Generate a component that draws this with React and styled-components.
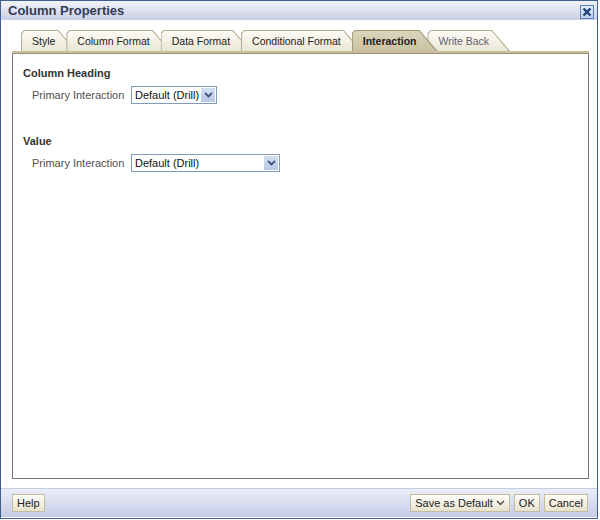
import React from 'react';
import styled, { createGlobalStyle } from 'styled-components';

const tabs = ['Style', 'Column Format', 'Data Format', 'Conditional Format', 'Interaction', 'Write Back'];

const Chevron = ({ color = '#3f5580', weight = 1.8 }) => (
  <svg width="9" height="6" viewBox="0 0 9 6">
    <path d="M1 1 L4.5 4.5 L8 1" fill="none" stroke={color} strokeWidth={weight} />
  </svg>
);

const Select = ({ value, width }) => (
  <SelectBox $width={width}>
    <span>{value}</span>
    <ArrowButton>
      <Chevron />
    </ArrowButton>
  </SelectBox>
);

const App = () => (
  <>
    <GlobalStyle />
    <Window>
      <TitleBar>
        <Title>Column Properties</Title>
        <CloseButton>
          <svg width="10" height="10" viewBox="0 0 10 10">
            <path d="M1.5 1.5 L8.5 8.5 M8.5 1.5 L1.5 8.5" stroke="#1f3f78" strokeWidth="2.4" />
          </svg>
        </CloseButton>
      </TitleBar>
      <Body>
        <TabRow>
          {tabs.map((t) => (
            <Tab key={t} $active={t === 'Interaction'} $muted={t === 'Write Back'}>
              <span>{t}</span>
            </Tab>
          ))}
        </TabRow>
        <TabBand />
        <Panel>
          <Section>
            <Heading>Column Heading</Heading>
            <Row>
              <Label>Primary Interaction</Label>
              <Select value="Default (Drill)" width={86} />
            </Row>
          </Section>
          <Section>
            <Heading>Value</Heading>
            <Row>
              <Label>Primary Interaction</Label>
              <Select value="Default (Drill)" width={149} />
            </Row>
          </Section>
        </Panel>
      </Body>
      <Footer>
        <Button>Help</Button>
        <Spacer />
        <Button>
          Save as Default <Chevron color="#333" weight={1.1} />
        </Button>
        <Button>OK</Button>
        <Button>Cancel</Button>
      </Footer>
    </Window>
  </>
);

const GlobalStyle = createGlobalStyle`
  body {
    margin: 0;
    background: #fff;
    font-family: "Liberation Sans", Arial, sans-serif;
    font-size: 11px;
  }
`;

const Window = styled.div`
  width: 596px;
  height: 517px;
  border: 1px solid #3e5f92;
  display: flex;
  flex-direction: column;
  background: #fff;
`;

const TitleBar = styled.div`
  flex-shrink: 0;
  height: 19px;
  display: flex;
  align-items: center;
  padding: 0 3px 0 7px;
  background: linear-gradient(#f2f3f9, #dfe2f1 50%, #c9cde6);
`;

const Title = styled.div`
  flex: 1;
  font-size: 13px;
  font-weight: bold;
  color: #323c58;
`;

const CloseButton = styled.div`
  width: 12px;
  height: 12px;
  margin-top: 3px;
  border: 1px solid #5b80b8;
  background: linear-gradient(#e4ecf8, #bfcfe9);
  display: flex;
  align-items: center;
  justify-content: center;
`;

const Body = styled.div`
  flex-shrink: 0;
  display: flex;
  flex-direction: column;
  padding: 10px 8px 0 11px;
`;

const TabRow = styled.div`
  flex-shrink: 0;
  display: flex;
  padding-left: 9px;
  height: 21px;
`;

const Tab = styled.div`
  position: relative;
  z-index: ${(p) => (p.$active ? 5 : 1)};
  height: 21px;
  padding: 0 21px 0 11px;
  margin-right: -10px;
  display: flex;
  align-items: center;
  font-size: 10.5px;
  background: ${(p) => (p.$active ? '#9d9474' : '#b4ad90')};
  clip-path: polygon(0 3px, 3px 0, calc(100% - 18px) 0, 100% 100%, 0 100%);
  color: ${(p) => (p.$muted ? '#635d72' : '#222')};
  font-weight: ${(p) => (p.$active ? 'bold' : 'normal')};

  &::before {
    content: '';
    position: absolute;
    inset: 0;
    background: ${(p) =>
      p.$active ? 'linear-gradient(#dcd6be, #c9c1a2)' : 'linear-gradient(#fdfcf6, #ebe7d6)'};
    clip-path: polygon(1px 3.5px, 3.5px 1px, calc(100% - 18.5px) 1px, calc(100% - 1.5px) 100%, 1px 100%);
  }

  span {
    position: relative;
    white-space: nowrap;
  }
`;

const TabBand = styled.div`
  flex-shrink: 0;
  height: 2px;
  background: #c8bf9f;
  border-bottom: 1px solid #9a9173;
  position: relative;
  z-index: 6;
`;

const Panel = styled.div`
  flex-shrink: 0;
  height: 412px;
  border: 1px solid #747474;
  border-top: none;
  padding: 12px 10px 0;
  display: flex;
  flex-direction: column;
  gap: 30px;
`;

const Section = styled.div`
  display: flex;
  flex-direction: column;
  gap: 6px;
`;

const Heading = styled.div`
  font-weight: bold;
  font-size: 11px;
  line-height: 14px;
  color: #333;
`;

const Row = styled.div`
  display: flex;
  align-items: center;
  padding-left: 9px;
`;

const Label = styled.div`
  width: 99px;
  color: #4f4f4f;
`;

const SelectBox = styled.div`
  width: ${(p) => p.$width - 6}px;
  height: 16px;
  border: 1px solid #7f9db9;
  display: flex;
  align-items: center;
  justify-content: space-between;
  padding: 0 1px 0 3px;
  color: #111;
`;

const ArrowButton = styled.div`
  width: 14px;
  height: 14px;
  background: linear-gradient(#d4def2, #b9c8e6);
  display: flex;
  align-items: center;
  justify-content: center;
`;

const Footer = styled.div`
  flex-shrink: 0;
  height: 28px;
  margin-top: 9px;
  border-top: 1px solid #c4cbe2;
  background: linear-gradient(#eceef6, #d6dbef 55%, #c5cbe6);
  display: flex;
  align-items: center;
  gap: 4px;
  padding: 0 9px 0 11px;
`;

const Spacer = styled.div`
  flex: 1;
`;

const Button = styled.div`
  height: 16px;
  padding: 0 4px;
  display: flex;
  align-items: center;
  gap: 3px;
  border: 1px solid #c3bd9f;
  background: linear-gradient(#fffef9, #f1eedf 60%, #e6e2cd);
  color: #222;
  white-space: nowrap;
`;

export default App;
